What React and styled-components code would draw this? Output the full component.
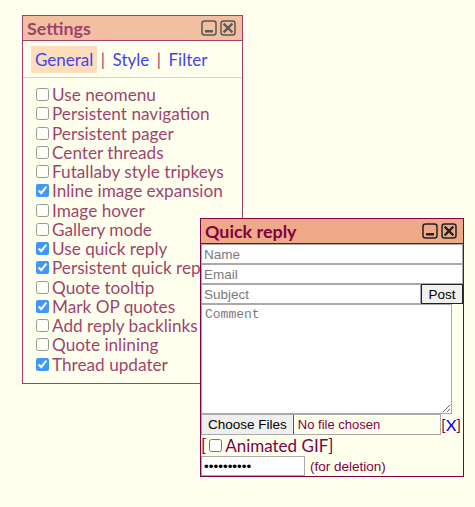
import React from "react";
import styled, { createGlobalStyle } from "styled-components";

const GlobalStyle = createGlobalStyle`
  html, body {
    margin: 0;
    padding: 0;
    background: #ffffee;
    width: 475px;
    height: 507px;
    overflow: hidden;
  }
  #root {
    position: relative;
    width: 475px;
    height: 507px;
  }
`;

const Window = styled.div`
  position: absolute;
  left: ${p => p.left}px;
  top: ${p => p.top}px;
  width: ${p => p.width}px;
  box-sizing: border-box;
  border: 1px solid #800043;
  background: #ffffee;
  opacity: ${p => p.faded ? 0.75 : 1};
  font-family: Lato, "Noto Sans", sans-serif;
  color: #800043;
`;

const TitleBar = styled.div`
  display: flex;
  align-items: center;
  height: 24px;
  padding: 0 6px 0 4px;
  background: #eeaa88;
  border-bottom: 1px solid #800043;
`;

const Title = styled.div`
  flex: 1;
  font-weight: bold;
  font-size: 17.9px;
  color: #800043;
`;

const TitleButtons = styled.div`
  display: flex;
  gap: 3px;
`;

const IconBox = styled.svg`
  display: block;
  width: 16px;
  height: 16px;
`;

const MinIcon = () => (
  <IconBox viewBox="0 0 16 16">
    <rect x="1" y="1" width="14" height="14" rx="2.5" fill="none" stroke="#222" strokeWidth="1.5" />
    <rect x="4" y="10" width="8" height="2.5" fill="#222" />
  </IconBox>
);

const CloseIcon = () => (
  <IconBox viewBox="0 0 16 16">
    <rect x="1" y="1" width="14" height="14" rx="2.5" fill="none" stroke="#222" strokeWidth="1.5" />
    <path d="M4.5 4.5 L11.5 11.5 M11.5 4.5 L4.5 11.5" stroke="#222" strokeWidth="2.4" strokeLinecap="square" />
  </IconBox>
);

const Tabs = styled.div`
  display: flex;
  align-items: center;
  padding: 5px 8px 4px 8px;
  border-bottom: 1px solid #d9bfb7;
  font-size: 17px;
`;

const Tab = styled.span`
  padding: 3px 4px;
  color: #0000ee;
  background: ${p => p.active ? "#fcd4ac" : "transparent"};
`;

const Sep = styled.span`
  color: #800043;
  margin: 0 3.5px;
`;

const OptionList = styled.div`
  padding: 7px 0 9px 11px;
`;

const Option = styled.label`
  display: flex;
  align-items: center;
  height: 19.25px;
  font-size: 17.2px;
  white-space: nowrap;
  overflow: hidden;
  input {
    margin: 0 3px 0 2px;
    width: 13px;
    height: 13px;
  }
`;

const Form = styled.div`
  font-family: "Liberation Sans", Arial, sans-serif;
  font-size: 13px;
`;

const TextField = styled.input`
  display: block;
  box-sizing: border-box;
  width: ${p => p.w ? `${p.w}px` : "100%"};
  height: 20px;
  margin: 0;
  padding: 1px 2px;
  border: 1px solid #a9a9a9;
  background: #fff;
  font: 13.5px "Liberation Sans", Arial, sans-serif;
  color: #000;
  &::placeholder { color: #7a7a7a; }
`;

const Row = styled.div`
  display: flex;
  align-items: center;
`;

const PostButton = styled.button`
  box-sizing: border-box;
  width: 42px;
  height: 20px;
  margin: 0;
  padding: 0;
  border: 1px solid #222;
  border-radius: 0;
  background: #efefef;
  font: 13.5px "Liberation Sans", Arial, sans-serif;
  color: #000;
`;

const Comment = styled.textarea`
  display: block;
  box-sizing: border-box;
  width: 251px;
  height: 110px;
  margin: 0;
  padding: 2px 3px;
  border: 1px solid #a9a9a9;
  background: #fff;
  font: 13px "Liberation Mono", monospace;
  &::placeholder { color: #7a7a7a; }
`;

const FileInput = styled.input`
  box-sizing: border-box;
  width: 240px;
  height: 21px;
  margin: 0;
  border: 1px solid #a9a9a9;
  font: 13px "Liberation Sans", Arial, sans-serif;
  color: #800043;
  &::file-selector-button {
    height: 19px;
    margin: 0 4px 0 0;
    padding: 0 6px;
    border: 0;
    border-right: 1px solid #555;
    background: #efefef;
    font: 13.5px "Liberation Sans", Arial, sans-serif;
    color: #000;
  }
`;

const Bracketed = styled.span`
  font-family: Lato, "Noto Sans", sans-serif;
  font-size: 16px;
  color: #800043;
  a { color: #0000ee; text-decoration: none; }
`;

const GifLabel = styled.label`
  display: flex;
  align-items: center;
  height: 21px;
  font-family: Lato, "Noto Sans", sans-serif;
  font-size: 17px;
  input {
    margin: 0 3px 0 3px;
    width: 13px;
    height: 13px;
  }
`;

const Note = styled.span`
  margin-left: 5px;
  font-size: 13.5px;
  color: #800043;
`;

const options = [
  ["Use neomenu", false],
  ["Persistent navigation", false],
  ["Persistent pager", false],
  ["Center threads", false],
  ["Futallaby style tripkeys", false],
  ["Inline image expansion", true],
  ["Image hover", false],
  ["Gallery mode", false],
  ["Use quick reply", true],
  ["Persistent quick reply", true],
  ["Quote tooltip", false],
  ["Mark OP quotes", true],
  ["Add reply backlinks", false],
  ["Quote inlining", false],
  ["Thread updater", true],
];

export default function App() {
  return (
    <>
      <GlobalStyle />
      <Window left={22} top={15} width={221} faded>
        <TitleBar>
          <Title>Settings</Title>
          <TitleButtons>
            <MinIcon />
            <CloseIcon />
          </TitleButtons>
        </TitleBar>
        <Tabs>
          <Tab active>General</Tab>
          <Sep>|</Sep>
          <Tab>Style</Tab>
          <Sep>|</Sep>
          <Tab>Filter</Tab>
        </Tabs>
        <OptionList>
          {options.map(([label, on]) => (
            <Option key={label}>
              <input type="checkbox" defaultChecked={on} />
              {label}
            </Option>
          ))}
        </OptionList>
      </Window>

      <Window left={200} top={218} width={264}>
        <TitleBar>
          <Title>Quick reply</Title>
          <TitleButtons>
            <MinIcon />
            <CloseIcon />
          </TitleButtons>
        </TitleBar>
        <Form>
          <TextField placeholder="Name" />
          <TextField placeholder="Email" />
          <Row>
            <TextField placeholder="Subject" style={{ flex: 1 }} />
            <PostButton>Post</PostButton>
          </Row>
          <Comment placeholder="Comment" />
          <Row>
            <FileInput type="file" multiple />
            <Bracketed>[<a href="#x">X</a>]</Bracketed>
          </Row>
          <GifLabel>
            [<input type="checkbox" />Animated GIF]
          </GifLabel>
          <Row>
            <TextField type="password" w={104} defaultValue="abcdefghij" />
            <Note>(for deletion)</Note>
          </Row>
        </Form>
      </Window>
    </>
  );
}
